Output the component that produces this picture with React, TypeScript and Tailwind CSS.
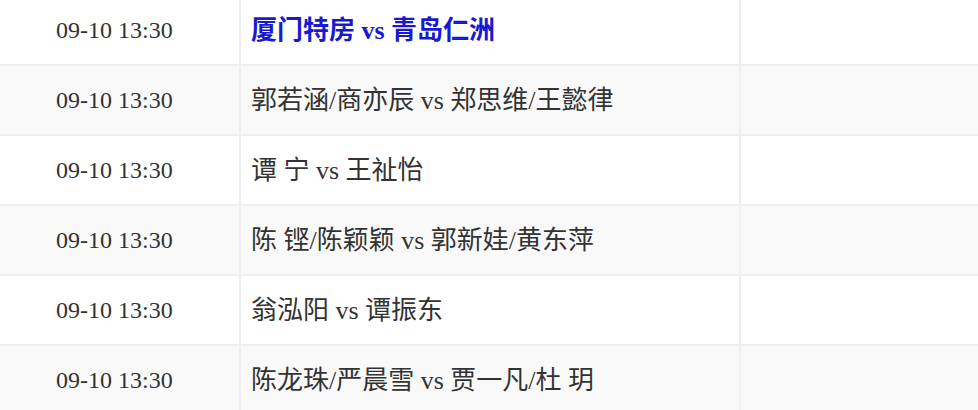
const matches = [
  { time: "09-10 13:30", name: "厦门特房 vs 青岛仁洲", link: true },
  { time: "09-10 13:30", name: "郭若涵/商亦辰 vs 郑思维/王懿律" },
  { time: "09-10 13:30", name: "谭 宁 vs 王祉怡" },
  { time: "09-10 13:30", name: "陈 铿/陈颖颖 vs 郭新娃/黄东萍" },
  { time: "09-10 13:30", name: "翁泓阳 vs 谭振东" },
  { time: "09-10 13:30", name: "陈龙珠/严晨雪 vs 贾一凡/杜 玥" },
];

export default function App() {
  return (
    <div className="h-[410px] w-[978px] overflow-hidden bg-white font-['Liberation_Serif','Noto_Sans_CJK_SC',serif] text-[#333]">
      <div className="mt-[-6px]">
        {matches.map((m, i) => (
          <div
            key={i}
            className={`flex h-[70px] border-t-2 border-[#efeff2] ${i % 2 === 1 ? "bg-[#f9f9f9]" : "bg-white"}`}
          >
            <div className="flex w-[239px] items-center pl-[56px] text-[24px]">{m.time}</div>
            <div className="flex w-[500px] items-center border-l-2 border-[#efeff2] px-[10px] text-[26px]">
              {m.link ? (
                <a href="#" className="font-bold text-[#1919cf]">
                  {m.name}
                </a>
              ) : (
                <span>{m.name}</span>
              )}
            </div>
            <div className="flex-1 border-l-2 border-[#efeff2]"></div>
          </div>
        ))}
      </div>
    </div>
  );
}
